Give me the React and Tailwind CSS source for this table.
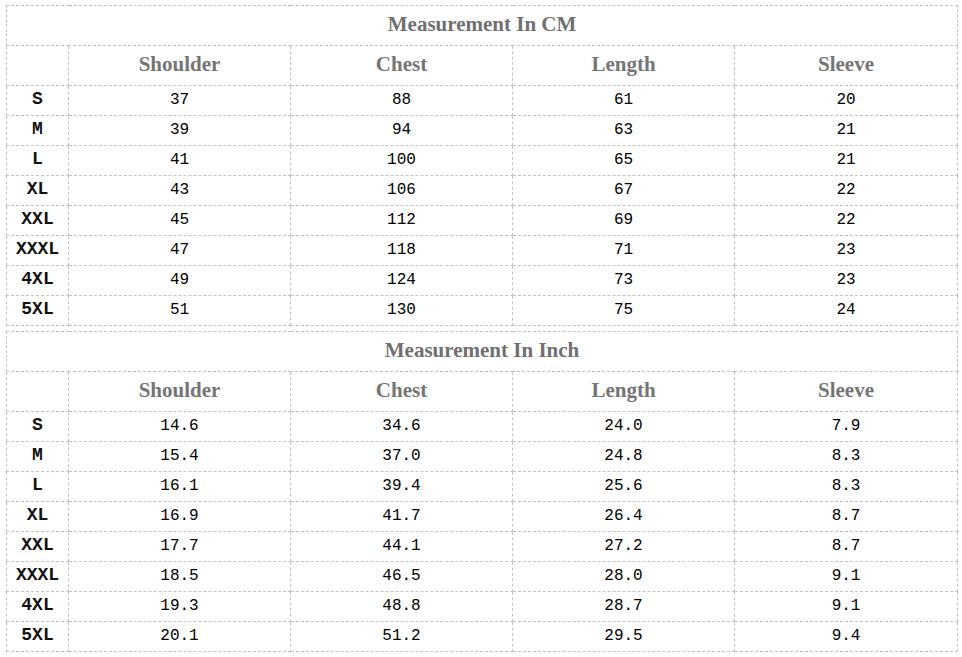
import React from "react";

const sizes = ["S", "M", "L", "XL", "XXL", "XXXL", "4XL", "5XL"];
const cm = [
  ["37", "88", "61", "20"],
  ["39", "94", "63", "21"],
  ["41", "100", "65", "21"],
  ["43", "106", "67", "22"],
  ["45", "112", "69", "22"],
  ["47", "118", "71", "23"],
  ["49", "124", "73", "23"],
  ["51", "130", "75", "24"],
];
const inch = [
  ["14.6", "34.6", "24.0", "7.9"],
  ["15.4", "37.0", "24.8", "8.3"],
  ["16.1", "39.4", "25.6", "8.3"],
  ["16.9", "41.7", "26.4", "8.7"],
  ["17.7", "44.1", "27.2", "8.7"],
  ["18.5", "46.5", "28.0", "9.1"],
  ["19.3", "48.8", "28.7", "9.1"],
  ["20.1", "51.2", "29.5", "9.4"],
];
const heads = ["Shoulder", "Chest", "Length", "Sleeve"];

const cell = "border border-dashed border-[#c4c4c4] p-0 pb-[2px] text-center align-middle";

function SizeTable({ title, rows, className }) {
  return (
    <table className={"table-fixed border-collapse w-[951px] " + className}>
      <colgroup>
        <col className="w-[62px]" />
        <col className="w-[222px]" />
        <col className="w-[222px]" />
        <col className="w-[222px]" />
        <col className="w-[223px]" />
      </colgroup>
      <tbody>
        <tr className="h-[40px]">
          <td colSpan={5} className={cell + " font-['Liberation_Serif',serif] font-bold text-[21px] text-[#707070]"}>
            {title}
          </td>
        </tr>
        <tr className="h-[40px]">
          <td className={cell}></td>
          {heads.map((h) => (
            <td key={h} className={cell + " font-['Liberation_Serif',serif] font-bold text-[21px] text-[#757575]"}>
              {h}
            </td>
          ))}
        </tr>
        {rows.map((r, i) => (
          <tr key={i} className="h-[30px]">
            <td className={cell + " font-['Liberation_Mono',monospace] font-bold text-[18px] text-[#111]"}>
              {sizes[i]}
            </td>
            {r.map((v, j) => (
              <td key={j} className={cell + " font-['Liberation_Mono',monospace] text-[16px] text-black"}>
                {v}
              </td>
            ))}
          </tr>
        ))}
      </tbody>
    </table>
  );
}

export default function App() {
  return (
    <div className="w-[962px] h-[657px] bg-white pl-[6px] pt-[5px]">
      <SizeTable title="Measurement In CM" rows={cm} className="" />
      <SizeTable title="Measurement In Inch" rows={inch} className="mt-[5px]" />
    </div>
  );
}
